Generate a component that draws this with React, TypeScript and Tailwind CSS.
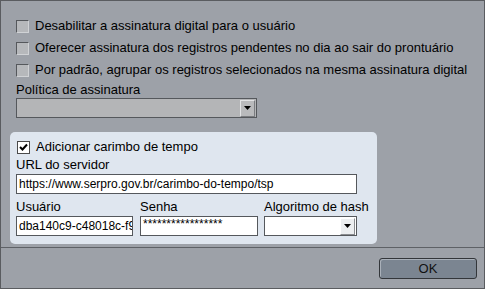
import React from "react";

function Arrow() {
  return (
    <svg width="7" height="4" viewBox="0 0 7 4">
      <path d="M0 0 H7 L3.5 4 Z" fill="#000" />
    </svg>
  );
}

function Check({ checked = false }: { checked?: boolean }) {
  if (checked) {
    return (
      <div className="w-[13px] h-[13px] shrink-0 bg-white border border-[#4a4a4a] flex items-center justify-center">
        <svg width="9" height="9" viewBox="0 0 9 9">
          <path d="M1 4 L3.5 6.5 L8 1.5" stroke="#000" strokeWidth="2" fill="none" />
        </svg>
      </div>
    );
  }
  return (
    <div className="w-[13px] h-[13px] shrink-0 bg-[#b6b8bb] border-t border-l border-[#55585c] border-r-[#d0d2d5] border-b-[#d0d2d5] border-r border-b" />
  );
}

export default function App() {
  return (
    <div className="w-[485px] h-[289px] box-border bg-[#9da1a8] border border-[#5a5c60] flex flex-col text-[13px] text-black font-['Liberation_Sans',Arial,sans-serif] leading-[14px]">
      <div className="h-[246px] pl-[15px] pt-[14px]">
        <div className="flex items-center h-[22px] gap-[6px]">
          <Check />
          <span className="whitespace-nowrap">Desabilitar a assinatura digital para o usuário</span>
        </div>
        <div className="flex items-center h-[22px] gap-[6px]">
          <Check />
          <span className="whitespace-nowrap">Oferecer assinatura dos registros pendentes no dia ao sair do prontuário</span>
        </div>
        <div className="flex items-center h-[22px] gap-[6px]">
          <Check />
          <span className="whitespace-nowrap">Por padrão, agrupar os registros selecionados na mesma assinatura digital</span>
        </div>
        <div className="mt-[2px] h-[15px] whitespace-nowrap">Política de assinatura</div>
        <div className="w-[241px] h-[20px] bg-[#b4b5b7] border border-[#55585c] flex justify-end items-center pr-[1px]">
          <div className="w-[15px] h-[17px] bg-[#b9babc] border border-t-[#e2e3e5] border-l-[#e2e3e5] border-r-[#7a7c80] border-b-[#7a7c80] flex items-center justify-center">
            <Arrow />
          </div>
        </div>
        <div className="mt-[14px] -ml-[6px] w-[367px] h-[112px] bg-[#dfe6ef] rounded-[5px] pl-[6px] pt-[4px]">
          <div className="flex items-center h-[22px] gap-[6px] pl-[1px]">
            <Check checked />
            <span className="whitespace-nowrap">Adicionar carimbo de tempo</span>
          </div>
          <div className="h-[15px] whitespace-nowrap">URL do servidor</div>
          <div className="mt-[1px] w-[341px] h-[20px] bg-white border border-[#55585c] pl-[2px] flex items-center overflow-hidden whitespace-nowrap text-[12px]">
            https://www.serpro.gov.br/carimbo-do-tempo/tsp
          </div>
          <div className="mt-[6px] flex">
            <div className="w-[117px]">
              <div className="h-[15px] whitespace-nowrap">Usuário</div>
              <div className="mt-[1px] h-[20px] bg-white border border-[#55585c] pl-[2px] flex items-center overflow-hidden whitespace-nowrap text-[12px]">
                dba140c9-c48018c-f9
              </div>
            </div>
            <div className="w-[118px] ml-[7px]">
              <div className="h-[15px] whitespace-nowrap">Senha</div>
              <div className="mt-[1px] h-[20px] bg-white border border-[#55585c] pl-[2px] pt-[1px] flex items-start overflow-hidden whitespace-nowrap text-[12px] leading-[12px]">
                *****************
              </div>
            </div>
            <div className="w-[93px] ml-[6px]">
              <div className="h-[15px] whitespace-nowrap">Algoritmo de hash</div>
              <div className="mt-[1px] h-[20px] bg-white border border-[#55585c] flex justify-end items-center pr-[1px]">
                <div className="w-[15px] h-[17px] bg-[#eceef0] border border-t-[#ffffff] border-l-[#ffffff] border-r-[#8a8c90] border-b-[#8a8c90] flex items-center justify-center">
                  <Arrow />
                </div>
              </div>
            </div>
          </div>
        </div>
      </div>
      <div className="flex-1 border-t border-[#5e6166] flex justify-end items-start pt-[10px] pr-[7px]">
        <div className="w-[98px] h-[21px] bg-[#7b8591] border border-[#33363a] rounded-[3px] shadow-[inset_1px_1px_0_#a9b0b9] flex items-center justify-center text-[#111]">
          OK
        </div>
      </div>
    </div>
  );
}
